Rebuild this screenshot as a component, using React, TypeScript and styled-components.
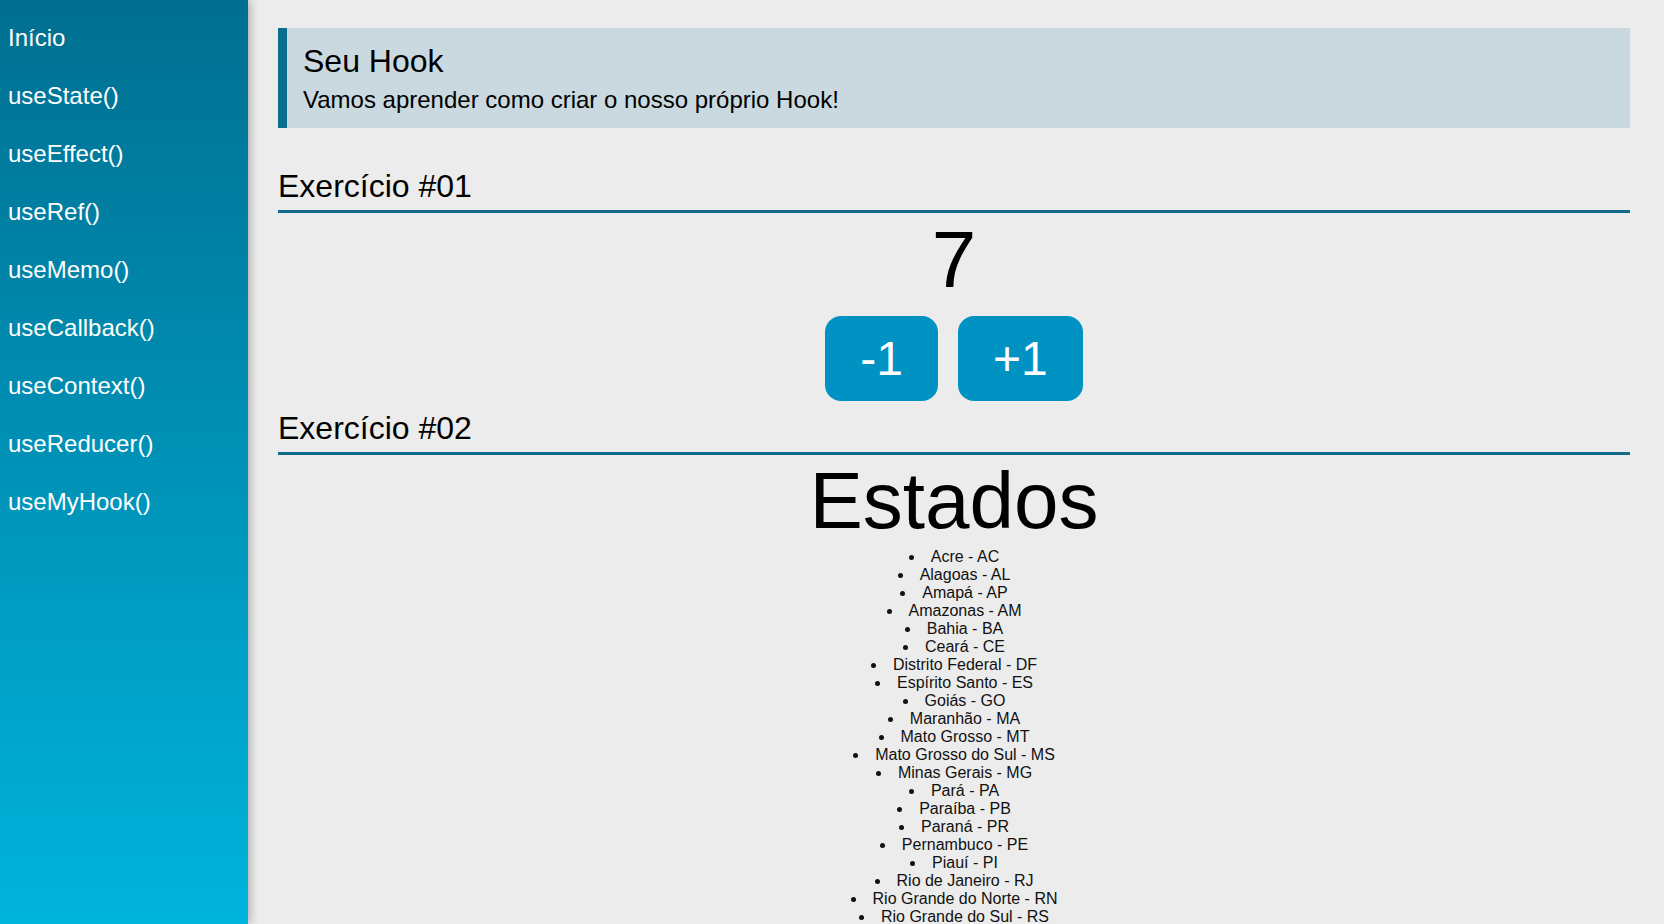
import React, { useState } from "react";
import styled, { createGlobalStyle } from "styled-components";

const GlobalStyle = createGlobalStyle`
  html, body {
    margin: 0;
    padding: 0;
    background: #ececec;
    font-family: "Liberation Sans", Arial, sans-serif;
    color: #000;
  }
`;

const Layout = styled.div`
  display: grid;
  grid-template-columns: 248px 1fr;
  min-height: 100vh;
`;

const Sidebar = styled.nav`
  position: sticky;
  top: 0;
  height: 100vh;
  z-index: 1;
  display: flex;
  flex-direction: column;
  padding-top: 9px;
  box-sizing: border-box;
  background: linear-gradient(to bottom, #006f91, #00b4dc);
  box-shadow: 2px 0 9px rgba(0, 0, 0, 0.28);
`;

const NavLink = styled.a`
  display: block;
  padding: 15px 8px;
  font-size: 24px;
  line-height: 28px;
  color: #fff;
  text-decoration: none;
  cursor: pointer;
`;

const Main = styled.main`
  padding: 28px 34px 40px 30px;
  min-width: 0;
`;

const Banner = styled.header`
  background: #cad9df;
  border-left: 9px solid #0a6e8f;
  padding: 15px 16px 14px 16px;
`;

const BannerTitle = styled.h1`
  margin: 0 0 6px 0;
  font-size: 32px;
  line-height: 37px;
  font-weight: 400;
`;

const BannerText = styled.p`
  margin: 0;
  font-size: 24px;
  line-height: 28px;
`;

const SectionTitle = styled.h2<{ $top: number }>`
  margin: ${(p) => p.$top}px 0 0 0;
  padding-bottom: 5px;
  font-size: 32px;
  line-height: 37px;
  font-weight: 400;
  border-bottom: 3px solid #136b8a;
`;

const Center = styled.div`
  display: flex;
  flex-direction: column;
  align-items: center;
`;

const Counter = styled.div`
  margin-top: 1px;
  font-size: 80px;
  line-height: 92px;
`;

const ButtonRow = styled.div`
  display: flex;
  gap: 20px;
  margin-top: 10px;
`;

const CountButton = styled.button`
  border: none;
  border-radius: 16px;
  background: #0092c3;
  color: #fff;
  font-family: inherit;
  font-size: 48px;
  line-height: 55px;
  padding: 15px 35px;
  cursor: pointer;
`;

const BigTitle = styled.h1`
  margin: 0 0 1px 0;
  font-size: 80px;
  line-height: 92px;
  font-weight: 400;
  text-align: center;
`;

const StateList = styled.ul`
  margin: 0;
  padding: 0;
  list-style-position: inside;
  text-align: center;
  font-size: 16px;
  line-height: 18px;
  color: #111;
`;

const links = [
  "Início",
  "useState()",
  "useEffect()",
  "useRef()",
  "useMemo()",
  "useCallback()",
  "useContext()",
  "useReducer()",
  "useMyHook()",
];

const estados = [
  ["Acre", "AC"],
  ["Alagoas", "AL"],
  ["Amapá", "AP"],
  ["Amazonas", "AM"],
  ["Bahia", "BA"],
  ["Ceará", "CE"],
  ["Distrito Federal", "DF"],
  ["Espírito Santo", "ES"],
  ["Goiás", "GO"],
  ["Maranhão", "MA"],
  ["Mato Grosso", "MT"],
  ["Mato Grosso do Sul", "MS"],
  ["Minas Gerais", "MG"],
  ["Pará", "PA"],
  ["Paraíba", "PB"],
  ["Paraná", "PR"],
  ["Pernambuco", "PE"],
  ["Piauí", "PI"],
  ["Rio de Janeiro", "RJ"],
  ["Rio Grande do Norte", "RN"],
  ["Rio Grande do Sul", "RS"],
  ["Rondônia", "RO"],
  ["Roraima", "RR"],
  ["Santa Catarina", "SC"],
  ["São Paulo", "SP"],
  ["Sergipe", "SE"],
  ["Tocantins", "TO"],
];

export default function App() {
  const [count, setCount] = useState(7);
  return (
    <>
      <GlobalStyle />
      <Layout>
        <Sidebar>
          {links.map((l) => (
            <NavLink key={l}>{l}</NavLink>
          ))}
        </Sidebar>
        <Main>
          <Banner>
            <BannerTitle>Seu Hook</BannerTitle>
            <BannerText>Vamos aprender como criar o nosso próprio Hook!</BannerText>
          </Banner>

          <SectionTitle $top={40}>Exercício #01</SectionTitle>
          <Center>
            <Counter>{count}</Counter>
            <ButtonRow>
              <CountButton onClick={() => setCount((c) => c - 1)}>-1</CountButton>
              <CountButton onClick={() => setCount((c) => c + 1)}>+1</CountButton>
            </ButtonRow>
          </Center>

          <SectionTitle $top={9}>Exercício #02</SectionTitle>
          <BigTitle>Estados</BigTitle>
          <StateList>
            {estados.map(([nome, sigla]) => (
              <li key={sigla}>
                {nome} - {sigla}
              </li>
            ))}
          </StateList>
        </Main>
      </Layout>
    </>
  );
}
